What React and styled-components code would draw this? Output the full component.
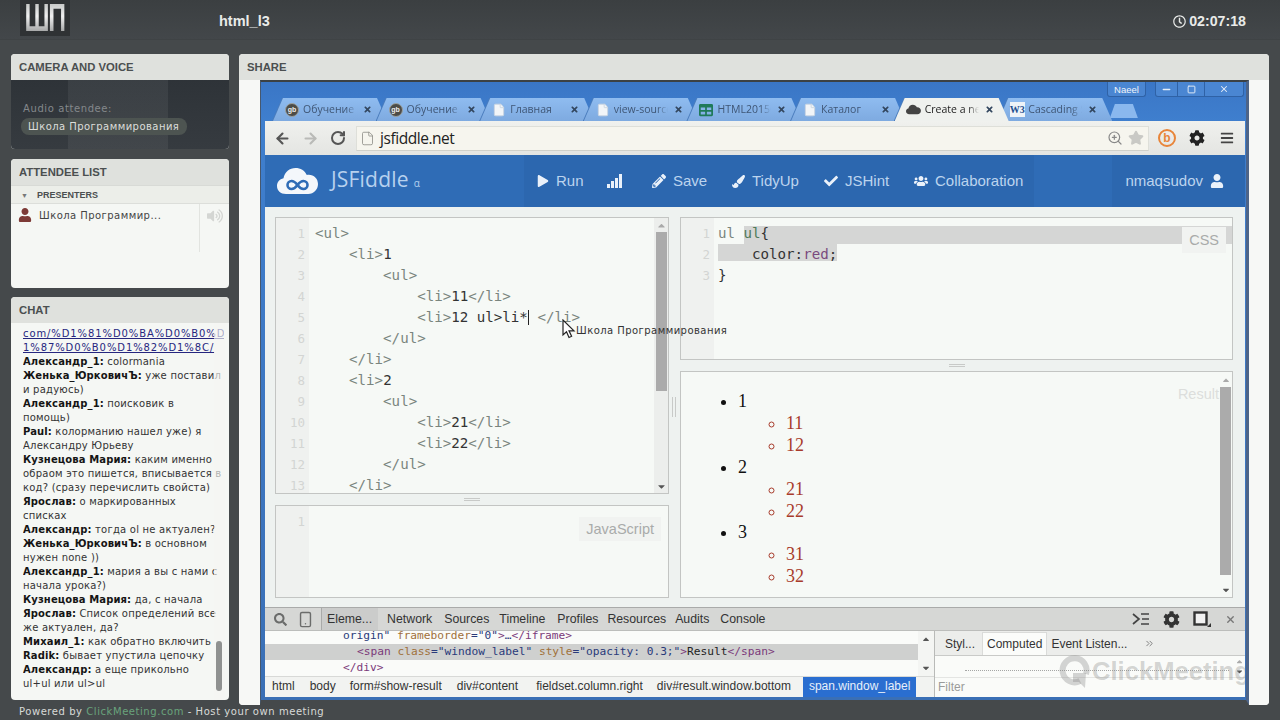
import styled, { createGlobalStyle } from 'styled-components'
import { ArrowLeft, ArrowRight, RotateCw, File, ZoomIn, Star, Smartphone, X, ChevronsRight, Minus, Square } from 'lucide-react'
import {
    FaRegClock, FaUser, FaVolumeUp, FaPlay, FaPencilAlt, FaPaintBrush, FaCheck, FaUsers,
    FaCog, FaBars, FaSearch, FaTable, FaCaretDown, FaCaretUp, FaTimes,
} from 'react-icons/fa'

const GlobalStyle = createGlobalStyle`
    html, body { margin: 0; padding: 0; background: #45494b; }
    * { box-sizing: border-box; }
`

const Page = styled.div`
    width: 1280px;
    height: 720px;
    overflow: hidden;
    background: #45494b;
    display: flex;
    flex-direction: column;
    font-family: "Liberation Sans", sans-serif;
`

/* top bar */
const TopBar = styled.header`
    height: 40px;
    flex: none;
    display: flex;
    align-items: flex-start;
    padding: 0 34px 0 20px;
    background: linear-gradient(#3b3f41, #43474a);
    border-bottom: 1px solid #3f4345;
`
const LogoBox = styled.div`
    width: 50px;
    height: 36px;
    flex: none;
    background: #2f3234;
    display: flex;
    justify-content: center;
`
const LogoText = styled.span`
    flex: none;
    font: 700 39px/36px "Liberation Sans", sans-serif;
    letter-spacing: -2px;
    transform: scaleX(0.64);
    background: linear-gradient(#b9bbba, #f0f0f0 45%, #8f9191);
    -webkit-background-clip: text;
    background-clip: text;
    color: transparent;
`
const MeetingTitle = styled.h1`
    margin: 12px 0 0 149px;
    font: 700 14.5px/18px "Liberation Sans", sans-serif;
    color: #e9ebe9;
`
const Clock = styled.div`
    margin: 12px 0 0 auto;
    display: flex;
    align-items: center;
    gap: 3px;
    font: 700 14.2px/18px "Liberation Sans", sans-serif;
    color: #e9ebe9;
`

/* page columns */
const Main = styled.main`
    height: 665px;
    flex: none;
    display: grid;
    grid-template-columns: 218px 1030px;
    column-gap: 10px;
    padding: 14px 0 0 11px;
`
const LeftColumn = styled.div`
    display: flex;
    flex-direction: column;
    padding-bottom: 5px;
`
const Panel = styled.section`
    position: relative;
    height: ${p => p.$h}px;
    margin-bottom: ${p => p.$mb || 0}px;
    border-radius: 4px;
    overflow: hidden;
    background: #f5f7f4;
    display: flex;
    flex-direction: column;
`
const PanelHead = styled.h2`
    margin: 0;
    height: 26px;
    flex: none;
    padding: 0 8px;
    font: 700 11.3px/26px "Liberation Sans", sans-serif;
    color: #4b4f50;
    background: #dfe1dd;
`

/* camera and voice */
const AudioBody = styled.div`
    flex: 1;
    padding: 22px 10px 0;
    background:
        linear-gradient(90deg, transparent 57px, rgba(255,255,255,.06) 57px, rgba(255,255,255,.06) 157px, transparent 157px),
        linear-gradient(#2e3338, #363b40);
`
const AudioLabel = styled.div`
    margin-left: 2px;
    font: 400 10px/14px "DejaVu Sans", sans-serif;
    letter-spacing: 0.6px;
    color: #84888b;
`
const AudioName = styled.div`
    display: inline-block;
    margin-top: 2px;
    padding: 0 8px 0 7px;
    height: 17px;
    border-radius: 8px;
    background: #4d5451;
    font: 400 10px/17px "DejaVu Sans", sans-serif;
    letter-spacing: 0.45px;
    color: #dcdeda;
    white-space: nowrap;
`

/* attendee list */
const GroupRow = styled.div`
    height: 19px;
    flex: none;
    display: flex;
    align-items: center;
    padding: 2px 0 0 10px;
    gap: 9px;
    background: #eceee9;
    border-top: 1px solid #d8dad6;
    border-bottom: 1px solid #dcdeda;
    font: 700 9px/17px "Liberation Sans", sans-serif;
    color: #4b4f50;
`
const GroupArrow = styled.span`
    font-size: 7px;
    color: #777;
`
const AttendeeRow = styled.div`
    height: 48px;
    display: flex;
    padding-left: 7px;
    font: 400 10px/24px "DejaVu Sans", sans-serif;
    letter-spacing: 0.45px;
    color: #444;
    svg { margin-top: 4px; flex: none; }
`
const AttendeeName = styled.span`
    width: 167px;
    padding-left: 7px;
    white-space: nowrap;
`
const AttendeeAudio = styled.div`
    flex: 1;
    padding-left: 7px;
    border-left: 1px solid #e2e4e0;
    color: #d4d6d3;
`

/* chat */
const ChatBody = styled.div`
    flex: 1;
    overflow: hidden;
    padding: 4px 5px 0 12px;
`
const ChatLine = styled.div`
    height: 14px;
    font: 400 10px/14px "DejaVu Sans", sans-serif;
    letter-spacing: 0.22px;
    color: #333;
    white-space: nowrap;
    overflow: hidden;
    b { color: #151515; letter-spacing: 0.12px; }
`
const ChatLink = styled.a`
    color: #26267f;
    text-decoration: underline;
    letter-spacing: 0.9px;
`
const ChatFade = styled.div`
    position: absolute;
    top: 26px;
    bottom: 0;
    right: 4px;
    width: 11px;
    background: rgba(244, 246, 243, 0.65);
`
const ChatThumb = styled.div`
    position: absolute;
    top: 344px;
    right: 7px;
    width: 6px;
    height: 50px;
    border-radius: 3px;
    background: #8f9190;
`

/* share panel and the captured browser */
const ShareBody = styled.div`
    flex: 1;
    min-height: 0;
    display: flex;
    padding: 0 20px 0 21px;
    background: #f7f8f6;
`
const Captured = styled.div`
    position: relative;
    flex: 1;
    min-width: 0;
    display: flex;
    flex-direction: column;
    padding: 0 1px 3px 4px;
    background: linear-gradient(#3a76c6, #3f7fce 40px, #3a6fb5);
    border-top: 2px solid #3c4144;
    border-left: 1px solid #46586f;
    border-right: 3px solid #4d6488;
    border-bottom: 5px solid #45494b;
`
const TabStrip = styled.div`
    height: 39px;
    flex: none;
    display: flex;
    align-items: flex-end;
    padding-left: 8px;
`
const Tab = styled.div`
    position: relative;
    z-index: ${p => (p.$active ? 2 : 1)};
    width: 114px;
    height: 23px;
    margin-right: -10.4px;
    filter: drop-shadow(-1px 0 0 #4a7cbc);
`
const TabShape = styled.div`
    height: 100%;
    display: flex;
    align-items: center;
    padding: 0 15px 0 11px;
    clip-path: polygon(0 100%, 10px 0, calc(100% - 10px) 0, 100% 100%);
    background: ${p => (p.$active ? '#eff1ee' : 'linear-gradient(#8fbcf0, #7eaae0)')};
    font: 400 10.5px/23px "Open Sans", sans-serif;
    color: ${p => (p.$active ? '#222' : '#3f5675')};
`
const Fav = styled.span`
    width: 16px;
    margin-right: 3px;
    flex: none;
    display: flex;
    justify-content: center;
    color: ${p => p.$color || '#eef3fa'};
`
const GbFav = styled.span`
    width: 14px;
    height: 14px;
    border-radius: 50%;
    background: #4c4c48;
    border: 1px solid #9aa0a0;
    color: #eee;
    font: 700 7px/12px "Liberation Sans", sans-serif;
    text-align: center;
`
const W3Fav = styled.span`
    width: 15px;
    height: 15px;
    background: #eef3f8;
    color: #1f4f8f;
    font: 700 10px/15px "Liberation Serif", serif;
    text-align: center;
`
const TabTitle = styled.span`
    flex: 1;
    min-width: 0;
    overflow: hidden;
    white-space: nowrap;
    -webkit-mask-image: linear-gradient(90deg, #000 80%, transparent);
    mask-image: linear-gradient(90deg, #000 80%, transparent);
`
const TabClose = styled.span`
    flex: none;
    display: flex;
    color: #33475f;
    margin-left: 6px;
`
const NewTab = styled.div`
    width: 28px;
    height: 14px;
    margin: 0 0 3px 8px;
    flex: none;
    clip-path: polygon(0 100%, 5px 0, calc(100% - 5px) 0, 100% 100%);
    background: #8ab8ee;
`
const WindowCaption = styled.div`
    position: absolute;
    top: 0;
    right: 2px;
    display: flex;
    gap: 9px;
    color: #e6eef8;
`
const NameBadge = styled.div`
    width: 39px;
    height: 15px;
    border: 1px solid #2f62a6;
    border-top: 0;
    border-radius: 0 0 3px 3px;
    background: #4a86d2;
    text-align: center;
    font: 400 9.5px/15px "Liberation Sans", sans-serif;
    color: #f0f4fa;
`
const CaptionButtons = styled.div`
    display: flex;
    height: 15px;
    border: 1px solid #2f62a6;
    border-top: 0;
    border-radius: 0 0 3px 3px;
    background: #4a86d2;
`
const CaptionButton = styled.div`
    width: ${p => p.$w}px;
    display: flex;
    align-items: center;
    justify-content: center;
    border-left: ${p => (p.$first ? '0' : '1px solid #2f62a6')};
`

const Toolbar = styled.div`
    height: 34px;
    flex: none;
    display: flex;
    align-items: center;
    padding-left: 3px;
    background: linear-gradient(#f0f1ee, #e4e5e2);
    color: #555;
`
const ToolButton = styled.span`
    width: ${p => p.$w || 28}px;
    flex: none;
    display: flex;
    justify-content: center;
    color: ${p => p.$color || '#555'};
`
const Omnibox = styled.div`
    width: 793px;
    height: 25px;
    flex: none;
    margin: 0 3px 0 4px;
    display: flex;
    align-items: center;
    padding: 0 4px 0 3px;
    gap: 5px;
    background: #f6f5ee;
    border: 1px solid #dedfd9;
    border-bottom-color: #cfd0ca;
    color: #8c8c86;
`
const Url = styled.span`
    flex: 1;
    font: 400 15.5px/25px "Open Sans", sans-serif;
    letter-spacing: -0.45px;
    color: #222;
`
const BitlyIcon = styled.span`
    width: 18px;
    height: 18px;
    border-radius: 50%;
    border: 2px solid #e8853a;
    color: #e8853a;
    font: 700 12px/14px "Liberation Sans", sans-serif;
    text-align: center;
`

/* jsfiddle */
const FiddleHead = styled.div`
    height: 52px;
    flex: none;
    display: flex;
    background: #2f6cb6;
    color: #bcd4ee;
    font: 400 15px/52px "Liberation Sans", sans-serif;
`
const Brand = styled.div`
    width: 259px;
    flex: none;
    display: flex;
    align-items: center;
    padding-left: 12px;
    gap: 13px;
`
const BrandName = styled.span`
    font: 400 21px/52px "Open Sans", sans-serif;
    letter-spacing: 0.2px;
    color: #b7d1ee;
    small { font-size: 10px; margin-left: 5px; letter-spacing: 0; }
`
const Nav = styled.nav`
    display: flex;
    background: #2c67af;
`
const NavItem = styled.div`
    width: ${p => p.$w}px;
    padding-left: ${p => p.$pad}px;
    display: flex;
    align-items: center;
    gap: ${p => p.$gap || 7}px;
    white-space: nowrap;
    svg { flex: none; color: #eaf1fa; }
`
const UserItem = styled.div`
    margin-left: auto;
    padding: 0 21px 0 13px;
    display: flex;
    align-items: center;
    gap: 7px;
    background: #2c67af;
    svg { color: #eaf1fa; }
`

const Workspace = styled.div`
    height: 400px;
    flex: none;
    display: grid;
    grid-template-columns: 394px 553px;
    column-gap: 11px;
    padding: 10px 0 0 10px;
    background: #eef2f0;
    position: relative;
`
const Column = styled.div`
    display: flex;
    flex-direction: column;
    height: ${p => p.$h}px;
`
const Pane = styled.div`
    position: relative;
    height: ${p => p.$h}px;
    flex: none;
    display: flex;
    overflow: hidden;
    border: 1px solid #c3c5c3;
    background: #f6f9f6;
`
const Gutter = styled.div`
    width: 33px;
    flex: none;
    padding: 5px 4px 0 0;
    background: #eff1ef;
    text-align: right;
    font: 400 12.5px/21px "DejaVu Sans Mono", monospace;
    color: #d3d5d3;
`
const Code = styled.div`
    flex: 1;
    min-width: 0;
    padding: 5px 0 0 ${p => p.$pad}px;
    font: 400 14.15px/21px "DejaVu Sans Mono", monospace;
    color: #333;
    white-space: pre;
`
const CodeLine = styled.div`
    height: 21px;
    display: ${p => (p.$flex ? 'flex' : 'block')};
`
const Tag = styled.span`
    color: ${p => p.$c || '#7a857e'};
`
const Caret = styled.span`
    display: inline-block;
    height: 15px;
    vertical-align: -3px;
    border-left: 1px solid #222;
`
const SelectedFill = styled.span`
    flex: 1;
    background: linear-gradient(#d5d6d5, #d5d6d5) no-repeat 0 3px / 100% 18px;
`
const SelectedInline = styled.span`
    display: inline-block;
    height: 21px;
    background: linear-gradient(#d5d6d5, #d5d6d5) no-repeat 0 0 / 100% 17px;
`
const ScrollTrack = styled.div`
    width: ${p => p.$w}px;
    flex: none;
    display: flex;
    flex-direction: column;
    align-items: center;
    background: ${p => p.$bg || '#eceeec'};
    color: #555;
`
const ArrowSlot = styled.span`
    height: ${p => p.$h || 14}px;
    flex: none;
    display: flex;
    align-items: center;
    margin-top: ${p => (p.$end ? 'auto' : 0)};
`
const ScrollThumb = styled.div`
    width: 11px;
    height: ${p => p.$h}px;
    background: #ababab;
`
const Splitter = styled.div`
    height: 11px;
    flex: none;
    display: flex;
    flex-direction: column;
    align-items: center;
    justify-content: center;
    gap: 1px;
    &::before, &::after {
        content: "";
        width: 16px;
        height: 1px;
        background: #c8cac8;
    }
`
const ColumnGrip = styled.div`
    position: absolute;
    left: 407px;
    top: 190px;
    width: 4px;
    height: 20px;
    border-left: 1px solid #c8cac8;
    border-right: 1px solid #c8cac8;
`
const PaneLabel = styled.div`
    position: absolute;
    top: ${p => p.$top}px;
    right: ${p => p.$right}px;
    padding: ${p => p.$pad};
    font: 400 14.5px/20px "Liberation Sans", sans-serif;
    color: ${p => p.$c || '#a9abaa'};
    background: ${p => (p.$c ? 'transparent' : '#f1f3f1')};
`
const ResultDoc = styled.div`
    flex: 1;
    padding-top: 19px;
    font: 400 18px/21.9px "Liberation Serif", serif;
    color: #111;
    ul { margin: 0; padding: 0 0 0 57px; }
    ul ul { padding-left: 48px; color: #a83b2b; }
`

const CursorWrap = styled.div`
    position: absolute;
    left: 297px;
    top: 112px;
    display: flex;
    font: 400 10px/24px "DejaVu Sans", sans-serif;
    letter-spacing: 0.45px;
    color: #333;
    white-space: nowrap;
`

/* devtools */
const Devtools = styled.div`
    position: relative;
    flex: 1;
    min-height: 0;
    display: flex;
    flex-direction: column;
    background: #fafbf9;
    overflow: hidden;
`
const DevBar = styled.div`
    height: 24px;
    flex: none;
    display: flex;
    align-items: center;
    padding-left: 9px;
    background: #d6d7d5;
    border-top: 1px solid #a9aaa9;
    border-bottom: 1px solid #bcbdbb;
    font: 400 12.3px/22px "Liberation Sans", sans-serif;
    color: #333;
`
const DevIcon = styled.span`
    width: ${p => p.$w}px;
    flex: none;
    display: flex;
    color: #6b6c6b;
`
const DevTab = styled.span`
    margin-left: ${p => p.$ml}px;
    padding: ${p => (p.$active ? '0 6px 0 5px' : '0')};
    height: 22px;
    background: ${p => (p.$active ? '#cbcccb' : 'transparent')};
    border-left: ${p => (p.$active ? '1px solid #a9aaa9' : '0')};
`
const DevActions = styled.div`
    margin-left: auto;
    padding-right: 9px;
    display: flex;
    align-items: center;
    gap: 13px;
    color: #333;
`
const DevPanels = styled.div`
    flex: 1;
    min-height: 0;
    display: grid;
    grid-template-columns: 670px 1fr;
`
const ElementsSide = styled.div`
    display: flex;
    flex-direction: column;
    border-right: 1px solid #b9bab8;
    min-height: 0;
`
const ElementsRow = styled.div`
    height: 45px;
    flex: none;
    display: flex;
    overflow: hidden;
`
const ElementsTree = styled.div`
    flex: 1;
    min-width: 0;
    overflow: hidden;
    font: 400 11.2px/16px "DejaVu Sans Mono", monospace;
    color: #2a3a7a;
    white-space: pre;
`
const TreeLine = styled.div`
    height: ${p => p.$h || 16}px;
    margin-top: ${p => p.$mt || 0}px;
    padding-left: ${p => p.$pad}px;
    background: ${p => (p.$selected ? '#cfd0cf' : 'transparent')};
`
const Crumbs = styled.div`
    flex: 1;
    display: flex;
    align-items: stretch;
    padding-left: 7px;
    border-top: 1px solid #d8d9d7;
    background: #f2f3f1;
    font: 400 12px/19px "Liberation Sans", sans-serif;
    color: #333;
    white-space: nowrap;
`
const Crumb = styled.span`
    margin-right: ${p => p.$mr}px;
    padding: ${p => (p.$active ? '0 6px' : '0')};
    background: ${p => (p.$active ? '#2a6ed0' : 'transparent')};
    color: ${p => (p.$active ? '#e8f0fa' : '#333')};
`
const StylesSide = styled.div`
    display: flex;
    flex-direction: column;
`
const StyleTabs = styled.div`
    height: 25px;
    flex: none;
    display: flex;
    align-items: flex-end;
    padding-left: 10px;
    background: #ecedeb;
    border-bottom: 1px solid #c9cac8;
    font: 400 12px/22px "Liberation Sans", sans-serif;
    color: #333;
`
const StyleTab = styled.span`
    margin-left: ${p => p.$ml || 0}px;
    padding: ${p => (p.$active ? '0 4px' : '0')};
    background: ${p => (p.$active ? '#fbfcfa' : 'transparent')};
    border: ${p => (p.$active ? '1px solid #dadbd9' : '0')};
    border-bottom: 0;
    display: flex;
    align-items: center;
    height: 23px;
`
const StyleBody = styled.div`
    height: 21px;
    flex: none;
    display: flex;
    overflow: hidden;
`
const StyleRule = styled.div`
    flex: 1;
    height: 1px;
    margin: 14px 4px 0 30px;
    border-top: 1px dotted #a5a6a5;
`
const FilterRow = styled.div`
    flex: 1;
    padding-left: 3px;
    border-top: 1px solid #e4e5e3;
    background: #fafbf9;
    font: 400 12px/18px "Liberation Sans", sans-serif;
    color: #9a9b9a;
`
const Watermark = styled.div`
    position: absolute;
    left: 794px;
    top: 46px;
    display: flex;
    align-items: center;
    gap: 1px;
    font: 700 25.6px/36px "Liberation Sans", sans-serif;
    color: rgba(130, 132, 130, 0.33);
    white-space: nowrap;
`

const Footer = styled.footer`
    height: 15px;
    flex: none;
    padding-left: 19px;
    font: 400 10px/14px "DejaVu Sans", sans-serif;
    letter-spacing: 0.56px;
    color: #d8dad8;
    a { color: #69a37c; }
`

const tabs = [
    { title: 'Обучение', fav: 'gb' },
    { title: 'Обучение', fav: 'gb' },
    { title: 'Главная', fav: 'page' },
    { title: 'view-source', fav: 'page' },
    { title: 'HTML2015Q', fav: 'sheet' },
    { title: 'Каталог', fav: 'page' },
    { title: 'Create a new', fav: 'cloud', active: true },
    { title: 'Cascading St', fav: 'w3' },
]

const chat = [
    <ChatLink href="#">com/%D1%81%D0%BA%D0%B0%D</ChatLink>,
    <ChatLink href="#">1%87%D0%B0%D1%82%D1%8C/</ChatLink>,
    <><b>Александр_1:</b> colormania</>,
    <><b>Женька_ЮрковичЪ:</b> уже поставил</>,
    'и радуюсь)',
    <><b>Александр_1:</b> поисковик в</>,
    'помощь)',
    <><b>Paul:</b> колорманию нашел уже) я</>,
    'Александру Юрьеву',
    <><b>Кузнецова Мария:</b> каким именно</>,
    'обраом это пишется, вписывается в',
    'код? (сразу перечислить свойста)',
    <><b>Ярослав:</b> о маркированных</>,
    'списках',
    <><b>Александр:</b> тогда ol не актуален?</>,
    <><b>Женька_ЮрковичЪ:</b> в основном</>,
    'нужен none ))',
    <><b>Александр_1:</b> мария а вы с нами с</>,
    'начала урока?)',
    <><b>Кузнецова Мария:</b> да, с начала</>,
    <><b>Ярослав:</b> Список определений все</>,
    'же актуален, да?',
    <><b>Михаил_1:</b> как обратно включить</>,
    <><b>Radik:</b> бывает упустила цепочку</>,
    <><b>Александр:</b> а еще прикольно</>,
    'ul+ul или ul>ul',
]

const htmlLines = [
    [0, '<ul>', ''],
    [1, '<li>', '1'],
    [2, '<ul>', ''],
    [3, '<li>', '11', '</li>'],
    [3, '<li>', '12 ul>li*', 'caret'],
    [2, '</ul>', ''],
    [1, '</li>', ''],
    [1, '<li>', '2'],
    [2, '<ul>', ''],
    [3, '<li>', '21', '</li>'],
    [3, '<li>', '22', '</li>'],
    [2, '</ul>', ''],
    [1, '</li>', ''],
]

const BarsIcon = () => (
    <svg width="15" height="14" viewBox="0 0 15 14" fill="currentColor">
        <rect x="0" y="10" width="3" height="4" />
        <rect x="4" y="7" width="3" height="7" />
        <rect x="8" y="4" width="3" height="10" />
        <rect x="12" y="0" width="3" height="14" />
    </svg>
)

const navItems = [
    { w: 68, pad: 13, gap: 7, icon: <FaPlay size={12} />, label: 'Run' },
    { w: 45, pad: 15, icon: <BarsIcon />, label: '' },
    { w: 82, pad: 15, icon: <FaPencilAlt size={14} />, label: 'Save' },
    { w: 93, pad: 13, icon: <FaPaintBrush size={13} />, label: 'TidyUp' },
    { w: 90, pad: 12, icon: <FaCheck size={14} />, label: 'JSHint' },
    { w: 132, pad: 12, icon: <FaUsers size={14} />, label: 'Collaboration' },
]

const devTabs = [
    ['Network', 9], ['Sources', 12], ['Timeline', 10], ['Profiles', 12],
    ['Resources', 9], ['Audits', 9], ['Console', 11],
]

const crumbs = [
    ['html', 15], ['body', 14], ['form#show-result', 15], ['div#content', 18],
    ['fieldset.column.right', 14], ['div#result.window.bottom', 12],
]

const CloudLogo = () => (
    <svg width="41" height="28" viewBox="0 0 41 28">
        <path fill="#f4f7fb" d="M9 27C3.5 27 0 23.5 0 19c0-4 2.6-7 6.5-7.8C7.6 5 12.6 1 18.5 1c5 0 9.300 2.600 11.300 7 .7-.2 1.400-.2 2-.2 5.200 0 9.200 4 9.200 9.300 0 5.600-4.300 9.900-9.800 9.900z" />
        <path fill="none" stroke="#2f6cb6" strokeWidth="2.600" d="M20.500 18c-2-2.700-3.800-4-6-4s-4 1.700-4 4 1.800 4 4 4 4-1.300 6-4c2-2.700 3.800-4 6-4s4 1.700 4 4-1.800 4-4 4-4-1.300-6-4z" />
    </svg>
)

const MouseArrow = () => (
    <svg width="14" height="20" viewBox="0 0 14 20">
        <path fill="#fff" stroke="#222" strokeWidth="1.200" d="M1 1v15l3.500-3.200L7 18.500l2.600-1.200L7 11.800h5z" />
    </svg>
)

const DrawerIcon = () => (
    <svg width="18" height="14" viewBox="0 0 18 14" fill="none" stroke="#444" strokeWidth="1.700">
        <path d="M1 2l6 5-6 5M9 2h8M10 7h7M9 12h8" />
    </svg>
)

const DockIcon = () => (
    <svg width="19" height="17" viewBox="0 0 19 17">
        <rect x="1.500" y="1.500" width="12" height="12" fill="#f2f2f2" stroke="#333" strokeWidth="2.400" />
        <path fill="#333" d="M18 12v4h-4z" />
    </svg>
)

const QLogo = () => (
    <svg width="32" height="36" viewBox="0 0 32 36">
        <path fill="none" stroke="rgba(130,132,130,.33)" strokeWidth="6" d="M21 28a12 12 0 1 1 6-7" />
        <path fill="rgba(130,132,130,.33)" d="M14 20h13l-1 15-6-6h-6z" />
    </svg>
)

const renderFav = fav => {
    if (fav === 'gb') return <Fav><GbFav>gb</GbFav></Fav>
    if (fav === 'sheet') return <Fav $color="#1f7a5a"><FaTable size={14} /></Fav>
    if (fav === 'cloud') return <Fav $color="#444"><svg width="15" height="11" viewBox="0 0 41 28"><path fill="currentColor" d="M9 27C3.500 27 0 23.500 0 19c0-4 2.600-7 6.500-7.800C7.600 5 12.600 1 18.500 1c5 0 9.300 2.600 11.300 7 5-1 11 3 11 9.200 0 5.600-4.300 9.800-9.800 9.800z" /></svg></Fav>
    if (fav === 'w3') return <Fav><W3Fav>W3</W3Fav></Fav>
    return <Fav><File size={14} fill="#f2f5f8" color="#c9d3df" strokeWidth={1.500} /></Fav>
}

const App = () => {
    return (
        <Page>
            <GlobalStyle />
            <TopBar>
                <LogoBox><LogoText>ШП</LogoText></LogoBox>
                <MeetingTitle>html_l3</MeetingTitle>
                <Clock><FaRegClock size={13} />02:07:18</Clock>
            </TopBar>

            <Main>
                <LeftColumn>
                    <Panel $h={95} $mb={10}>
                        <PanelHead>CAMERA AND VOICE</PanelHead>
                        <AudioBody>
                            <AudioLabel>Audio attendee:</AudioLabel>
                            <AudioName>Школа Программирования</AudioName>
                        </AudioBody>
                    </Panel>
                    <Panel $h={129} $mb={9}>
                        <PanelHead>ATTENDEE LIST</PanelHead>
                        <GroupRow><GroupArrow>▼</GroupArrow>PRESENTERS</GroupRow>
                        <AttendeeRow>
                            <FaUser size={14} color="#7d3a36" />
                            <AttendeeName>Школа Программир...</AttendeeName>
                            <AttendeeAudio><FaVolumeUp size={16} /></AttendeeAudio>
                        </AttendeeRow>
                    </Panel>
                    <Panel $h={403}>
                        <PanelHead>CHAT</PanelHead>
                        <ChatBody>
                            {chat.map((line, i) => <ChatLine key={i}>{line}</ChatLine>)}
                        </ChatBody>
                        <ChatFade />
                        <ChatThumb />
                    </Panel>
                </LeftColumn>

                <Panel $h={651}>
                    <PanelHead>SHARE</PanelHead>
                    <ShareBody>
                        <Captured>
                            <WindowCaption>
                                <NameBadge>Naeel</NameBadge>
                                <CaptionButtons>
                                    <CaptionButton $first $w={21}><Minus size={11} strokeWidth={3} /></CaptionButton>
                                    <CaptionButton $w={27}><Square size={9} strokeWidth={2.500} /></CaptionButton>
                                    <CaptionButton $w={39}><X size={10} strokeWidth={2.500} /></CaptionButton>
                                </CaptionButtons>
                            </WindowCaption>

                            <TabStrip>
                                {tabs.map((t, i) => (
                                    <Tab key={i} $active={t.active}>
                                        <TabShape $active={t.active}>
                                            {renderFav(t.fav)}
                                            <TabTitle>{t.title}</TabTitle>
                                            <TabClose><FaTimes size={9} /></TabClose>
                                        </TabShape>
                                    </Tab>
                                ))}
                                <NewTab />
                            </TabStrip>

                            <Toolbar>
                                <ToolButton><ArrowLeft size={17} strokeWidth={3} /></ToolButton>
                                <ToolButton $color="#b9bab7"><ArrowRight size={17} strokeWidth={3} /></ToolButton>
                                <ToolButton><RotateCw size={16} strokeWidth={3} /></ToolButton>
                                <Omnibox>
                                    <File size={15} strokeWidth={1.300} />
                                    <Url>jsfiddle.net</Url>
                                    <ZoomIn size={16} strokeWidth={1.800} color="#888" />
                                    <Star size={16} fill="#c9c9c5" color="#c9c9c5" />
                                </Omnibox>
                                <ToolButton $w={30}><BitlyIcon>b</BitlyIcon></ToolButton>
                                <ToolButton $w={30} $color="#222"><FaCog size={16} /></ToolButton>
                                <ToolButton $w={30} $color="#444"><FaBars size={14} /></ToolButton>
                            </Toolbar>

                            <FiddleHead>
                                <Brand>
                                    <CloudLogo />
                                    <BrandName>JSFiddle<small>α</small></BrandName>
                                </Brand>
                                <Nav>
                                    {navItems.map((item, i) => (
                                        <NavItem key={i} $w={item.w} $pad={item.pad} $gap={item.gap}>
                                            {item.icon}{item.label}
                                        </NavItem>
                                    ))}
                                </Nav>
                                <UserItem>nmaqsudov <FaUser size={14} /></UserItem>
                            </FiddleHead>

                            <Workspace>
                                <Column $h={381}>
                                    <Pane $h={277}>
                                        <Gutter>
                                            {htmlLines.map((_, i) => <div key={i}>{i + 1}</div>)}
                                        </Gutter>
                                        <Code $pad={6}>
                                            {htmlLines.map(([depth, tag, text, end], i) => (
                                                <CodeLine key={i}>
                                                    {'    '.repeat(depth)}<Tag>{tag}</Tag>{text}
                                                    {end === 'caret'
                                                        ? <><Caret /> <Tag>{'</li>'}</Tag></>
                                                        : end && <Tag>{end}</Tag>}
                                                </CodeLine>
                                            ))}
                                        </Code>
                                        <ScrollTrack $w={14}>
                                            <ArrowSlot><FaCaretUp size={11} color="#aaa" /></ArrowSlot>
                                            <ScrollThumb $h={159} />
                                            <ArrowSlot $end><FaCaretDown size={11} /></ArrowSlot>
                                        </ScrollTrack>
                                    </Pane>
                                    <Splitter />
                                    <Pane $h={93}>
                                        <Gutter>1</Gutter>
                                        <Code $pad={5} />
                                        <PaneLabel $top={11} $right={7} $pad="2px 7px">JavaScript</PaneLabel>
                                    </Pane>
                                </Column>

                                <Column $h={380}>
                                    <Pane $h={143}>
                                        <Gutter>
                                            <div>1</div><div>2</div><div>3</div>
                                        </Gutter>
                                        <Code $pad={4}>
                                            <CodeLine $flex><Tag>{'ul '}</Tag><SelectedFill><Tag $c="#4f7a58">ul</Tag>{'{'}</SelectedFill></CodeLine>
                                            <CodeLine><SelectedInline>{'    color:'}<Tag $c="#7a4a7e">red</Tag>;</SelectedInline></CodeLine>
                                            <CodeLine>{'}'}</CodeLine>
                                        </Code>
                                        <PaneLabel $top={9} $right={6} $pad="3px 7px">CSS</PaneLabel>
                                    </Pane>
                                    <Splitter />
                                    <Pane $h={227}>
                                        <ResultDoc>
                                            <ul>
                                                {[1, 2, 3].map(n => (
                                                    <li key={n}>
                                                        {n}
                                                        <ul>
                                                            <li>{n}1</li>
                                                            <li>{n}2</li>
                                                        </ul>
                                                    </li>
                                                ))}
                                            </ul>
                                        </ResultDoc>
                                        <PaneLabel $top={12} $right={13} $pad="0" $c="#dcdedc">Result</PaneLabel>
                                        <ScrollTrack $w={13} $bg="transparent">
                                            <ArrowSlot $h={15}><FaCaretUp size={10} color="#aaa" /></ArrowSlot>
                                            <ScrollThumb $h={188} />
                                            <ArrowSlot $end><FaCaretDown size={10} /></ArrowSlot>
                                        </ScrollTrack>
                                    </Pane>
                                </Column>

                                <ColumnGrip />
                                <CursorWrap><MouseArrow />Школа Программирования</CursorWrap>
                            </Workspace>

                            <Devtools>
                                <DevBar>
                                    <DevIcon $w={23}><FaSearch size={13} /></DevIcon>
                                    <DevIcon $w={24}><Smartphone size={17} strokeWidth={2} /></DevIcon>
                                    <DevTab $active $ml={0}>Eleme...</DevTab>
                                    {devTabs.map(([label, ml]) => <DevTab key={label} $ml={ml}>{label}</DevTab>)}
                                    <DevActions>
                                        <DrawerIcon />
                                        <FaCog size={17} color="#333" />
                                        <DockIcon />
                                        <X size={11} strokeWidth={3} color="#777" />
                                    </DevActions>
                                </DevBar>
                                <DevPanels>
                                    <ElementsSide>
                                        <ElementsRow>
                                            <ElementsTree>
                                                <TreeLine $pad={78} $mt={-3}>
                                                    origin" <Tag $c="#a0703a">frameborder</Tag>="0"<Tag $c="#7b3a7a">{'>'}</Tag>…<Tag $c="#7b3a7a">{'</iframe>'}</Tag>
                                                </TreeLine>
                                                <TreeLine $pad={92} $selected>
                                                    <Tag $c="#7b3a7a">{'<span '}</Tag><Tag $c="#a0703a">class</Tag>="window_label" <Tag $c="#a0703a">style</Tag>="opacity: 0.3;"<Tag $c="#7b3a7a">{'>'}</Tag><Tag $c="#222">Result</Tag><Tag $c="#7b3a7a">{'</span>'}</Tag>
                                                </TreeLine>
                                                <TreeLine $pad={78}><Tag $c="#7b3a7a">{'</div>'}</Tag></TreeLine>
                                            </ElementsTree>
                                            <ScrollTrack $w={16} $bg="#f4f5f3">
                                                <ArrowSlot $h={16}><FaCaretUp size={10} /></ArrowSlot>
                                                <ArrowSlot $end $h={16}><FaCaretDown size={10} /></ArrowSlot>
                                            </ScrollTrack>
                                        </ElementsRow>
                                        <Crumbs>
                                            {crumbs.map(([label, mr]) => <Crumb key={label} $mr={mr}>{label}</Crumb>)}
                                            <Crumb $active $mr={0}>span.window_label</Crumb>
                                        </Crumbs>
                                    </ElementsSide>
                                    <StylesSide>
                                        <StyleTabs>
                                            <StyleTab>Styl...</StyleTab>
                                            <StyleTab $active $ml={7}>Computed</StyleTab>
                                            <StyleTab $ml={4}>Event Listen...</StyleTab>
                                            <StyleTab $ml={17}><ChevronsRight size={11} color="#777" /></StyleTab>
                                        </StyleTabs>
                                        <StyleBody>
                                            <StyleRule />
                                            <ScrollTrack $w={12} $bg="transparent">
                                                <ArrowSlot $h={10}><FaCaretUp size={9} color="#aaa" /></ArrowSlot>
                                                <ArrowSlot $h={10}><FaCaretDown size={9} /></ArrowSlot>
                                            </ScrollTrack>
                                        </StyleBody>
                                        <FilterRow>Filter</FilterRow>
                                    </StylesSide>
                                </DevPanels>
                                <Watermark><QLogo />ClickMeeting</Watermark>
                            </Devtools>
                        </Captured>
                    </ShareBody>
                </Panel>
            </Main>

            <Footer>Powered by <a>ClickMeeting.com</a> - Host your own meeting</Footer>
        </Page>
    )
}

export default App
